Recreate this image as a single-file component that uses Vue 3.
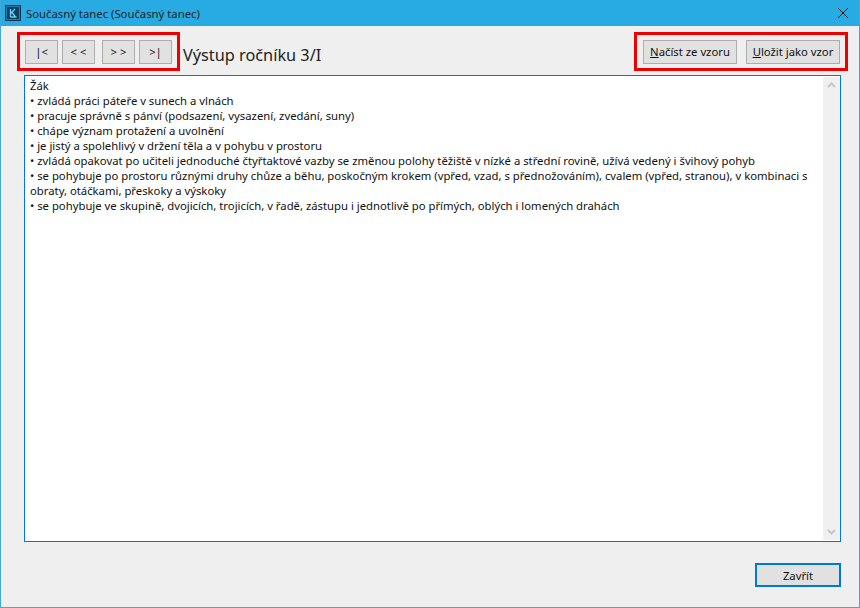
<script setup>
const lines = [
  'Žák',
  '• zvládá práci páteře v sunech a vlnách',
  '• pracuje správně s pánví (podsazení, vysazení, zvedání, suny)',
  '• chápe význam protažení a uvolnění',
  '• je jistý a spolehlivý v držení těla a v pohybu v prostoru',
  '• zvládá opakovat po učiteli jednoduché čtyřtaktové vazby se změnou polohy těžiště v nízké a střední rovině, užívá vedený i švihový pohyb',
  '• se pohybuje po prostoru různými druhy chůze a běhu, poskočným krokem (vpřed, vzad, s přednožováním), cvalem (vpřed, stranou), v kombinaci s obraty, otáčkami, přeskoky a výskoky',
  '• se pohybuje ve skupině, dvojicích, trojicích, v řadě, zástupu i jednotlivě po přímých, oblých i lomených drahách'
]
</script>

<template>
  <div class="window">
    <header class="titlebar">
      <svg class="logo" width="16" height="16" viewBox="0 0 16 16">
        <rect x="0" y="0" width="16" height="16" fill="#0c3550" />
        <rect x="1.5" y="1.5" width="13" height="13" fill="#0f3f5e" stroke="#1f7fa8" stroke-width="1" />
        <path d="M5.5 4v8M5.5 8.5 10 4M7 7.5 10.5 12M5.5 12h6" stroke="#5fd0f4" stroke-width="1.4" fill="none" />
      </svg>
      <span class="title">Současný tanec (Současný tanec)</span>
      <svg class="close" width="12" height="12" viewBox="0 0 12 12">
        <path d="M1 1l10 10M11 1 1 11" stroke="#111" stroke-width="1" fill="none" />
      </svg>
    </header>

    <main class="body">
      <div class="toolbar">
        <div class="nav-group">
          <div class="outlined nav">
            <button class="btn nav-btn">|&lt;</button>
            <button class="btn nav-btn">&lt; &lt;</button>
            <button class="btn nav-btn wide-gap">&gt; &gt;</button>
            <button class="btn nav-btn">&gt;|</button>
          </div>
          <h1 class="heading">Výstup ročníku 3/I</h1>
        </div>
        <div class="outlined actions">
          <button class="btn action-btn"><u>N</u>ačíst ze vzoru</button>
          <button class="btn action-btn"><u>U</u>ložit jako vzor</button>
        </div>
      </div>

      <div class="editor">
        <div class="text">
          <div v-for="(line, i) in lines" :key="i">{{ line }}</div>
        </div>
        <div class="scrollbar">
          <svg width="9" height="6" viewBox="0 0 9 6"><path d="M1 5l3.5-3.5L8 5" stroke="#c6c6c6" stroke-width="2" fill="none" /></svg>
          <svg width="9" height="6" viewBox="0 0 9 6"><path d="M1 1l3.5 3.5L8 1" stroke="#c6c6c6" stroke-width="2" fill="none" /></svg>
        </div>
      </div>

      <div class="footer">
        <button class="btn close-btn">Zavřít</button>
      </div>
    </main>
  </div>
</template>

<style>
html, body { margin: 0; padding: 0; }
</style>

<style scoped>
.window {
  width: 860px;
  height: 608px;
  box-sizing: border-box;
  display: flex;
  flex-direction: column;
  background: #efefef;
  border: 1px solid #3fa9dc;
  border-top: 0;
  font-family: "Noto Sans", "Open Sans", sans-serif;
  font-size: 11.3px;
  color: #111;
}
.titlebar {
  height: 26px;
  flex: none;
  display: flex;
  align-items: center;
  background: #28abe3;
  padding: 0 10px 0 4px;
}
.logo { flex: none; }
.title { margin-left: 5px; font-size: 11.3px; color: #16232c; }
.close { margin-left: auto; }
.body {
  flex: 1;
  display: flex;
  flex-direction: column;
  padding: 6px 11px 19px 16px;
  min-height: 0;
}
.toolbar {
  display: flex;
  justify-content: space-between;
  height: 39px;
  flex: none;
}
.nav-group { display: flex; align-items: center; }
.outlined {
  box-sizing: border-box;
  height: 39px;
  border: 3px solid #ee0000;
  display: flex;
  align-items: center;
}
.nav { width: 163px; padding-left: 5px; gap: 4px; }
.actions { width: 214px; padding-left: 6px; gap: 9px; }
.heading {
  margin: 6px 0 0 3px;
  font-size: 16.3px;
  font-weight: 400;
  color: #222;
}
.btn {
  box-sizing: border-box;
  height: 24px;
  padding: 0;
  background: #e1e1e1;
  border: 1px solid #adadad;
  font: inherit;
  color: #111;
}
.nav-btn { width: 33px; }
.wide-gap { margin-left: 3px; }
.action-btn { width: 94px; }
.editor {
  flex: none;
  height: 467px;
  margin: 4px 7px 0 7px;
  box-sizing: border-box;
  border: 1px solid #0078d7;
  background: #fff;
  display: flex;
}
.text {
  flex: 1;
  padding: 2px 4px 0 5px;
  line-height: 15px;
}
.scrollbar {
  width: 17px;
  flex: none;
  background: #f0f0f0;
  margin: 1px 0 1px 0;
  display: flex;
  flex-direction: column;
  justify-content: space-between;
  align-items: center;
  padding: 5px 0;
  box-sizing: border-box;
}
.footer {
  display: flex;
  justify-content: flex-end;
  margin-top: 21px;
  padding-right: 7px;
}
.close-btn {
  width: 86px;
  border: 2px solid #0078d7;
}
</style>
